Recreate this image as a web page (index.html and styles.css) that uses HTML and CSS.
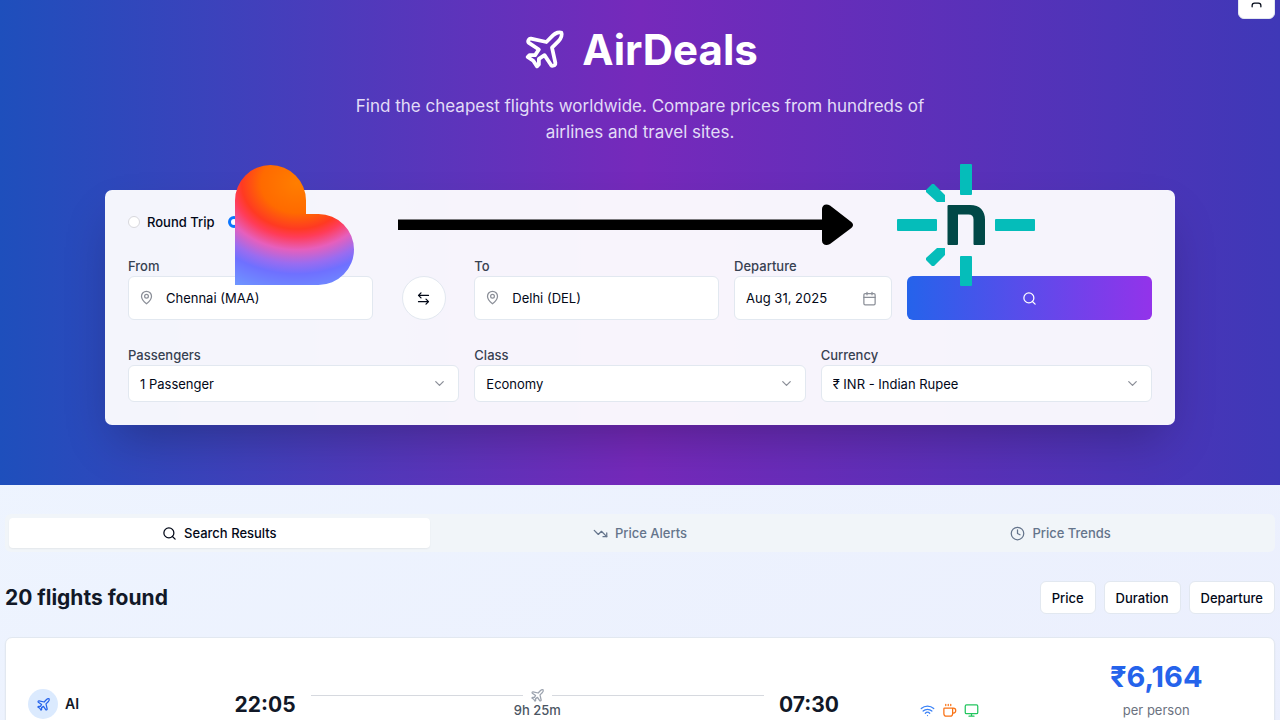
FILE: index.html
```html
<!DOCTYPE html>
<html lang="en">
<head>
	<meta charset="UTF-8">
	<meta name="viewport" content="width=device-width, initial-scale=1">
	<title>AirDeals</title>
	<link rel="stylesheet" href="styles.css">
</head>
<body>
	<svg width="0" height="0" class="sprite" aria-hidden="true">
		<symbol id="plane" viewBox="0 0 24 24"><path d="M17.8 19.2 16 11l3.5-3.5C21 6 21.5 4 21 3c-1-.5-3 0-4.5 1.5L13 8 4.8 6.2c-.5-.1-.9.1-1.1.5l-.3.5c-.2.5-.1 1 .3 1.3L9 12l-2 3H4l-1 1 3 2 2 3 1-1v-3l3-2 3.5 5.3c.3.4.8.5 1.3.3l.5-.2c.4-.3.6-.7.5-1.2z"/></symbol>
		<symbol id="pin" viewBox="0 0 24 24"><path d="M20 10c0 6-8 12-8 12s-8-6-8-12a8 8 0 0 1 16 0Z"/><circle cx="12" cy="10" r="3"/></symbol>
		<symbol id="search" viewBox="0 0 24 24"><circle cx="11" cy="11" r="8"/><path d="m21 21-4.300-4.300"/></symbol>
		<symbol id="chevron" viewBox="0 0 24 24"><path d="m6 9 6 6 6-6"/></symbol>
	</svg>

	<header class="hero">
		<button class="user-btn" type="button" aria-label="Account">
			<svg class="icon" viewBox="0 0 24 24"><path d="M19 22v-2a4 4 0 0 0-4-4H9a4 4 0 0 0-4 4v2"/><circle cx="12" cy="6" r="4"/></svg>
		</button>
		<div class="brand">
			<svg class="icon brand-icon"><use href="#plane"/></svg>
			<h1>AirDeals</h1>
		</div>
		<p class="tagline">Find the cheapest flights worldwide. Compare prices from hundreds of airlines and travel sites.</p>

		<form class="search-card">
			<div class="trip-type">
				<label><input type="radio" name="trip">Round Trip</label>
				<input type="radio" name="trip" aria-label="One way" checked>
			</div>
			<div class="row route-row">
				<div class="field span-3">
					<label for="from">From</label>
					<div class="control">
						<svg class="icon lead"><use href="#pin"/></svg>
						<input id="from" class="box place" type="text" value="Chennai (MAA)">
					</div>
				</div>
				<button class="swap" type="button" aria-label="Swap airports">
					<svg class="icon" viewBox="0 0 24 24"><path d="M8 3 4 7l4 4M4 7h16M16 21l4-4-4-4M20 17H4"/></svg>
				</button>
				<div class="field span-3">
					<label for="to">To</label>
					<div class="control">
						<svg class="icon lead"><use href="#pin"/></svg>
						<input id="to" class="box place" type="text" value="Delhi (DEL)">
					</div>
				</div>
				<div class="field span-2">
					<label for="departure">Departure</label>
					<button id="departure" class="box date" type="button">Aug 31, 2025
						<svg class="icon" viewBox="0 0 24 24"><path d="M8 2v4M16 2v4M3 10h18"/><rect x="3" y="4" width="18" height="18" rx="2"/></svg>
					</button>
				</div>
				<button class="search-btn span-3" type="button" aria-label="Search flights"><svg class="icon"><use href="#search"/></svg></button>
			</div>
			<div class="row options-row">
				<div class="field">
					<label for="passengers">Passengers</label>
					<div class="control">
						<select id="passengers" class="box"><option>1 Passenger</option></select>
						<svg class="icon trail"><use href="#chevron"/></svg>
					</div>
				</div>
				<div class="field">
					<label for="class">Class</label>
					<div class="control">
						<select id="class" class="box"><option>Economy</option></select>
						<svg class="icon trail"><use href="#chevron"/></svg>
					</div>
				</div>
				<div class="field">
					<label for="currency">Currency</label>
					<div class="control">
						<select id="currency" class="box"><option>₹ INR - Indian Rupee</option></select>
						<svg class="icon trail"><use href="#chevron"/></svg>
					</div>
				</div>
			</div>

			<div class="overlay" aria-hidden="true">
				<svg width="119" height="120" viewBox="0 0 119 120">
					<defs>
						<radialGradient id="warm" gradientUnits="userSpaceOnUse" cx="0" cy="0" r="1" gradientTransform="translate(62 18) scale(138 115)">
							<stop offset="0" stop-color="#ff7e00"/>
							<stop offset=".26" stop-color="#ff6a00"/>
							<stop offset=".4" stop-color="#ff3a22"/>
							<stop offset=".47" stop-color="#ff3c58"/>
							<stop offset=".58" stop-color="#e65fbc"/>
							<stop offset=".7" stop-color="#9a6cf0"/>
							<stop offset=".79" stop-color="#6f70ff"/>
							<stop offset="1" stop-color="#6f98ff"/>
						</radialGradient>
					</defs>
					<path fill="url(#warm)" d="M0 120V35.500a35.500 35.500 0 0 1 71 0V49h12.500a35.500 35.500 0 0 1 0 71z"/>
				</svg>
				<svg width="455" height="42" viewBox="0 0 455 42">
					<path d="M0 15.500h424V5c0-4 4-6 8-3.500l20 15.500c4 3 4 5 0 8l-20 15c-4 2.500-8 .5-8-3.500V26H0z"/>
				</svg>
				<svg width="138" height="122" viewBox="0 0 138 122">
					<g fill="#05bdba">
						<rect x="63" y="0" width="12" height="31" rx="1"/>
						<rect x="63" y="92" width="12" height="30" rx="1"/>
						<rect x="0" y="55" width="40" height="12" rx="1"/>
						<rect x="98" y="55" width="40" height="12" rx="1"/>
						<path d="M29 28v-2l6-6h2l11 11v7h-8zM29 94v2l6 6h2l11-11v-7h-8z"/>
					</g>
					<path fill="#014847" d="M51.500 41H73c10 0 15 6 15 14.500V80q0 1-1 1H77.500q-1 0-1-1V55.500q0-5-5-5H61V80q0 1-1 1h-8.500q-1 0-1-1V42q0-1 1-1z"/>
				</svg>
			</div>
		</form>
	</header>

	<main class="results">
		<div class="tabs" role="tablist">
			<button class="tab active" type="button" role="tab" aria-selected="true"><svg class="icon"><use href="#search"/></svg>Search Results</button>
			<button class="tab" type="button" role="tab" aria-selected="false"><svg class="icon" viewBox="0 0 24 24"><path d="M22 17l-8.500-8.500-5 5L2 7"/><path d="M16 17h6v-6"/></svg>Price Alerts</button>
			<button class="tab" type="button" role="tab" aria-selected="false"><svg class="icon" viewBox="0 0 24 24"><circle cx="12" cy="12" r="10"/><path d="M12 6v6l4 2"/></svg>Price Trends</button>
		</div>

		<div class="results-head">
			<h2>20 flights found</h2>
			<div class="sort">
				<button type="button">Price</button>
				<button type="button">Duration</button>
				<button type="button">Departure</button>
			</div>
		</div>

		<article class="flight">
			<div class="airline">
				<span class="airline-logo"><svg class="icon"><use href="#plane"/></svg></span>
				<span>AI</span>
			</div>
			<div class="times">
				<span class="time">22:05</span>
				<div class="leg">
					<div class="leg-line"><svg class="icon"><use href="#plane"/></svg></div>
					<span>9h 25m</span>
				</div>
				<span class="time">07:30</span>
			</div>
			<div class="amenities">
				<svg class="icon wifi" viewBox="0 0 24 24"><path d="M12 20h.01M2 8.820a15 15 0 0 1 20 0M5 12.859a10 10 0 0 1 14 0M8.500 16.429a5 5 0 0 1 7 0"/></svg>
				<svg class="icon meal" viewBox="0 0 24 24"><path d="M10 2v2M14 2v2M6 2v2M16 8a1 1 0 0 1 1 1v8a4 4 0 0 1-4 4H7a4 4 0 0 1-4-4V9a1 1 0 0 1 1-1h14a4 4 0 1 1 0 8h-1"/></svg>
				<svg class="icon screen" viewBox="0 0 24 24"><rect x="2" y="3" width="20" height="14" rx="2"/><path d="M8 21h8M12 17v4"/></svg>
			</div>
			<div class="fare">
				<strong>₹6,164</strong>
				<span>per person</span>
			</div>
		</article>
	</main>
</body>
</html>
```

FILE: styles.css
```css
*{
	box-sizing: border-box;
}
body{
	margin: 0;
	min-height: 100vh;
	overflow-x: hidden;
	font: 13px/18px Inter, "Liberation Sans", sans-serif;
	color: #020817;
	background: linear-gradient(to bottom right, #eff6ff, #ebeffd);
}
h1,h2,p{
	margin: 0;
}
button,input,select{
	font: inherit;
	color: inherit;
	margin: 0;
}
button{
	cursor: pointer;
}
.sprite{
	position: absolute;
}
.icon{
	width: 15px;
	height: 15px;
	flex: none;
	fill: none;
	stroke: currentColor;
	stroke-width: 2;
	stroke-linecap: round;
	stroke-linejoin: round;
}

/* hero */
.hero{
	position: relative;
	padding: 27px 5px 60px;
	background: linear-gradient(to right, #1e4fbc, #7629bb, #3f38b7);
}
.user-btn{
	position: absolute;
	top: -18px;
	right: 5px;
	width: 37px;
	height: 37px;
	padding: 0;
	display: flex;
	align-items: center;
	justify-content: center;
	background: #fff;
	border: 1px solid #e2e8f0;
	border-radius: 6px;
}
.brand{
	display: flex;
	align-items: center;
	justify-content: center;
	gap: 15px;
	color: #fff;
}
.brand-icon{
	width: 45px;
	height: 45px;
}
.brand h1{
	font-size: 42px;
	line-height: 45px;
	font-weight: 700;
}
.tagline{
	max-width: 624px;
	margin: 21px auto 45px;
	font-size: 17px;
	line-height: 26px;
	text-align: center;
	color: #e2dcf7;
}

/* search form */
.search-card{
	position: relative;
	display: flex;
	flex-direction: column;
	gap: 26px;
	max-width: 1070px;
	margin: 0 auto;
	padding: 23px;
	background: rgba(255,255,255,.95);
	border-radius: 7px;
	box-shadow: 0 23px 46px -11px rgba(0,0,0,.25);
}
.trip-type{
	display: flex;
	align-items: center;
	gap: 13px;
	font-weight: 500;
}
.trip-type label{
	display: flex;
	align-items: center;
	gap: 7px;
}
.trip-type input{
	appearance: none;
	width: 12px;
	height: 12px;
	border: 1px solid #d8d8dd;
	border-radius: 50%;
	background: #fff;
}
.trip-type input:checked{
	border: 3px solid #0a75ff;
}
.row{
	display: grid;
	gap: 15px;
	align-items: end;
}
.route-row{
	grid-template-columns: repeat(12, 1fr);
}
.options-row{
	grid-template-columns: repeat(3, 1fr);
}
.span-2{
	grid-column: span 2;
}
.span-3{
	grid-column: span 3;
}
.field label{
	display: block;
	line-height: 19px;
	font-weight: 500;
	color: #374151;
}
.control{
	position: relative;
}
.box{
	display: block;
	width: 100%;
	height: 44px;
	padding: 0 11px;
	border: 1px solid #e2e8f0;
	border-radius: 6px;
	background: #fff;
}
.place{
	padding-left: 37px;
}
.date{
	display: flex;
	align-items: center;
	justify-content: space-between;
	padding-right: 14px;
}
.date .icon,.lead,.trail{
	color: #8b8f98;
}
select.box{
	appearance: none;
	height: 37px;
}
.lead,.trail{
	position: absolute;
	top: 50%;
	margin-top: -8px;
	pointer-events: none;
}
.lead{
	left: 11px;
}
.trail{
	right: 12px;
}
.swap{
	justify-self: center;
	width: 44px;
	height: 44px;
	padding: 0;
	display: flex;
	align-items: center;
	justify-content: center;
	border: 1px solid #e2e8f0;
	border-radius: 50%;
	background: #fff;
}
.search-btn{
	height: 44px;
	display: flex;
	align-items: center;
	justify-content: center;
	border: 0;
	border-radius: 6px;
	color: #fff;
	background: linear-gradient(to right, #2563eb, #9333ea);
}

/* heart, arrow and n mark lying over the form */
.overlay{
	position: absolute;
	top: -26px;
	left: 130px;
	display: flex;
	align-items: center;
	gap: 44px;
	pointer-events: none;
}

/* results */
.results{
	padding: 29px 5px;
}
.tabs{
	display: grid;
	grid-template-columns: repeat(3, 1fr);
	padding: 4px;
	border-radius: 6px;
	background: #f1f5f9;
}
.tab{
	display: flex;
	align-items: center;
	justify-content: center;
	gap: 7px;
	height: 30px;
	padding: 0;
	border: 0;
	border-radius: 4px;
	background: none;
	font-weight: 500;
	color: #64748b;
}
.tab.active{
	background: #fff;
	color: #020817;
	box-shadow: 0 1px 2px rgba(0,0,0,.06);
}
.results-head{
	display: flex;
	align-items: center;
	justify-content: space-between;
	margin: 29px 0 23px;
}
.results-head h2{
	font-size: 21px;
	line-height: 30px;
	font-weight: 700;
	color: #111827;
}
.sort{
	display: flex;
	gap: 8px;
}
.sort button{
	height: 33px;
	padding: 0 11px;
	border: 1px solid #e2e8f0;
	border-radius: 6px;
	background: #fff;
	font-weight: 500;
}
.flight{
	display: grid;
	grid-template-columns: repeat(12, 1fr);
	gap: 15px;
	align-items: end;
	padding: 23px 22px;
	border: 1px solid #e2e8f0;
	border-radius: 7px;
	background: #fff;
	box-shadow: 0 1px 2px rgba(0,0,0,.05);
	color: #111827;
}
.airline{
	grid-column: span 2;
	display: flex;
	align-items: center;
	gap: 7px;
	font-size: 14px;
	font-weight: 600;
}
.airline-logo{
	display: flex;
	align-items: center;
	justify-content: center;
	width: 30px;
	height: 30px;
	border-radius: 50%;
	background: #dbeafe;
	color: #2563eb;
}
.times{
	grid-column: span 6;
	display: flex;
	align-items: flex-end;
	gap: 15px;
}
.time{
	font-size: 21px;
	line-height: 28px;
	font-weight: 700;
}
.leg{
	flex: 1;
	text-align: center;
	font-weight: 500;
	color: #4b5563;
}
.leg-line{
	display: flex;
	align-items: center;
	gap: 7px;
	height: 12px;
	color: #9ca3af;
}
.leg-line:before,.leg-line:after{
	content: "";
	flex: 1;
	height: 1px;
	background: #d6d9df;
}
.amenities{
	grid-column: span 2;
	display: flex;
	align-items: center;
	justify-content: center;
	gap: 7px;
	height: 18px;
}
.wifi{
	color: #3b82f6;
}
.meal{
	color: #f97316;
}
.screen{
	color: #22c55e;
}
.fare{
	grid-column: span 2;
	display: flex;
	flex-direction: column;
	gap: 8px;
	text-align: center;
	color: #6b7280;
}
.fare strong{
	font-size: 29px;
	line-height: 32px;
	color: #2563eb;
}
```
